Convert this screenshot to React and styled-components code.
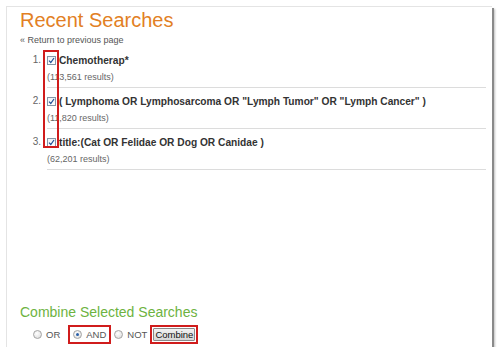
import React from "react";
import styled, { createGlobalStyle } from "styled-components";

const Global = createGlobalStyle`
  html, body { margin: 0; padding: 0; background: #ffffff; }
  body { font-family: "Liberation Sans", Arial, sans-serif; }
`;

const Card = styled.div`
  box-sizing: border-box;
  margin: 6px 0 0 6px;
  width: 486px;
  height: 341px;
  border-top: 1px solid #e4e4e4;
  border-left: 1px solid #e4e4e4;
  box-shadow: 2px 2px 0 #8a8a8a, 3px 3px 2px rgba(0, 0, 0, 0.25);
  display: flex;
  flex-direction: column;
  padding: 1px 6px 3px 0;
  background: #fff;
`;

const Title = styled.h1`
  margin: 0 0 0 13px;
  font-size: 20px;
  line-height: 24px;
  font-weight: normal;
  color: #e27f24;
`;

const BackLink = styled.a`
  margin: 2px 0 0 13px;
  font-size: 9px;
  line-height: 12px;
  color: #555;
  text-decoration: none;
`;

const List = styled.ol`
  position: relative;
  list-style: none;
  margin: 7px 0 0 0;
  padding: 0;
  display: flex;
  flex-direction: column;
  gap: 6px;
`;

const Item = styled.li`
  display: flex;
`;

const Num = styled.span`
  box-sizing: border-box;
  width: 40px;
  padding-right: 6px;
  text-align: right;
  font-size: 10px;
  line-height: 14px;
  color: #666;
`;

const Body = styled.div`
  flex: 1;
  padding-bottom: 4px;
  border-bottom: 1px solid #dcdcdc;
`;

const QueryLine = styled.div`
  display: flex;
  align-items: center;
  gap: 3px;
  height: 14px;
`;

const Query = styled.span`
  font-size: 10.2px;
  font-weight: bold;
  color: #333;
  white-space: nowrap;
`;

const Results = styled.div`
  margin-top: 4px;
  font-size: 9px;
  line-height: 12px;
  color: #666;
`;

const Box = styled.span`
  box-sizing: border-box;
  width: 9px;
  height: 9px;
  border: 1px solid #8595a6;
  background: linear-gradient(#eef2f6, #ffffff);
  display: inline-flex;
  align-items: center;
  justify-content: center;
`;

const Highlight = styled.div`
  position: absolute;
  box-sizing: border-box;
  border: 2px solid #d01c1c;
  left: ${(p) => p.$x}px;
  top: ${(p) => p.$y}px;
  width: ${(p) => p.$w}px;
  height: ${(p) => p.$h}px;
  pointer-events: none;
`;

const Combine = styled.section`
  margin-top: auto;
  padding-left: 13px;
`;

const SubTitle = styled.h2`
  margin: 0;
  font-size: 14px;
  line-height: 16px;
  font-weight: normal;
  color: #6db33f;
`;

const OptionRow = styled.div`
  display: flex;
  align-items: center;
  gap: 3px;
  margin: 5px 0 0 13px;
  height: 19px;
`;

const Option = styled.label`
  box-sizing: border-box;
  display: inline-flex;
  align-items: center;
  gap: 4px;
  height: 19px;
  padding: 0 ${(p) => (p.$marked ? 3 : 0)}px;
  border: ${(p) => (p.$marked ? "2px solid #d01c1c" : "none")};
  font-size: 9.5px;
  color: #555;
  &:first-child {
    margin-right: 5px;
  }
`;

const Radio = styled.span`
  box-sizing: border-box;
  width: 9px;
  height: 9px;
  border-radius: 50%;
  border: 1px solid #a4a4a4;
  background: radial-gradient(circle at 40% 35%, #ffffff, #d8d8d8);
  display: inline-flex;
  align-items: center;
  justify-content: center;
  &::after {
    content: "";
    width: 3px;
    height: 3px;
    border-radius: 50%;
    background: ${(p) => (p.$on ? "#2a5fa8" : "transparent")};
  }
`;

const ButtonFrame = styled.span`
  box-sizing: border-box;
  display: inline-flex;
  align-items: center;
  height: 19px;
  padding: 0 1px;
  border: 2px solid #d01c1c;
`;

const Button = styled.button`
  font-family: "Liberation Sans", Arial, sans-serif;
  font-size: 9.5px;
  line-height: 11px;
  padding: 0 1px;
  color: #111;
  background: linear-gradient(#f2f2f2, #d6d6d6);
  border: 1px solid #8a8a8a;
  border-radius: 1px;
`;

const Check = () => (
  <Box>
    <svg width="7" height="7" viewBox="0 0 7 7">
      <path d="M1 3.6 L2.8 5.5 L6 1" fill="none" stroke="#1f4f96" strokeWidth="1.2" />
    </svg>
  </Box>
);

const searches = [
  { q: "Chemotherap*", r: "(113,561 results)" },
  { q: '( Lymphoma OR Lymphosarcoma OR "Lymph Tumor" OR "Lymph Cancer" )', r: "(11,820 results)" },
  { q: "title:(Cat OR Felidae OR Dog OR Canidae )", r: "(62,201 results)" },
];

export default function App() {
  return (
    <>
      <Global />
      <Card>
        <Title>Recent Searches</Title>
        <BackLink href="#">« Return to previous page</BackLink>
        <List>
          {searches.map((s, i) => (
            <Item key={i}>
              <Num>{i + 1}.</Num>
              <Body>
                <QueryLine>
                  <Check />
                  <Query>{s.q}</Query>
                </QueryLine>
                <Results>{s.r}</Results>
              </Body>
            </Item>
          ))}
          <Highlight $x={36} $y={-3} $w={16} $h={98} />
        </List>
        <Combine>
          <SubTitle>Combine Selected Searches</SubTitle>
          <OptionRow>
            <Option>
              <Radio />
              OR
            </Option>
            <Option $marked>
              <Radio $on />
              AND
            </Option>
            <Option>
              <Radio />
              NOT
            </Option>
            <ButtonFrame>
              <Button>Combine</Button>
            </ButtonFrame>
          </OptionRow>
        </Combine>
      </Card>
    </>
  );
}
